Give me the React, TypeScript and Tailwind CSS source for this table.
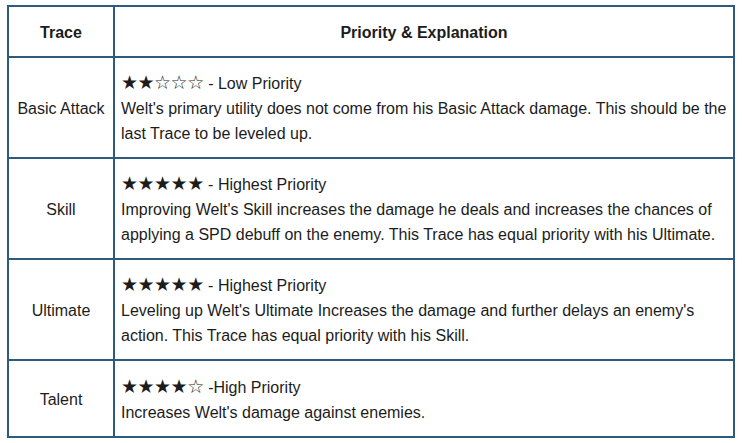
import React from "react";

interface TraceRow {
  name: string;
  stars: number;
  label: string;
  text: string;
}

const rows: TraceRow[] = [
  {
    name: "Basic Attack",
    stars: 2,
    label: " - Low Priority",
    text: "Welt's primary utility does not come from his Basic Attack damage. This should be the last Trace to be leveled up.",
  },
  {
    name: "Skill",
    stars: 5,
    label: " - Highest Priority",
    text: "Improving Welt's Skill increases the damage he deals and increases the chances of applying a SPD debuff on the enemy. This Trace has equal priority with his Ultimate.",
  },
  {
    name: "Ultimate",
    stars: 5,
    label: " - Highest Priority",
    text: "Leveling up Welt's Ultimate Increases the damage and further delays an enemy's action. This Trace has equal priority with his Skill.",
  },
  {
    name: "Talent",
    stars: 4,
    label: " -High Priority",
    text: "Increases Welt's damage against enemies.",
  },
];

const Stars = ({ count }: { count: number }) => (
  <span className="text-[19px] leading-none font-['DejaVu_Sans',sans-serif] tracking-[-0.5px]">
    {"★".repeat(count)}
    {"☆".repeat(5 - count)}
  </span>
);

const cell = "border-2 border-[#2c5b7d]";

export default function App() {
  return (
    <div className="pt-[5px] pl-[7px] bg-white min-h-screen font-['Liberation_Sans',Arial,sans-serif] text-[16px] text-[#1c1c1c]">
      <table className="border-collapse w-[728px]">
        <thead>
          <tr className="h-[51px]">
            <th className={`${cell} w-[106px] font-bold pt-[3px]`}>Trace</th>
            <th className={`${cell} font-bold pt-[3px]`}>Priority &amp; Explanation</th>
          </tr>
        </thead>
        <tbody>
          {rows.map((r, i) => (
            <tr key={r.name} className={i === 3 ? "h-[77px]" : "h-[101px]"}>
              <td className={`${cell} text-center pt-[2px]`}>{r.name}</td>
              <td className={`${cell} px-[6px] pt-[2px] leading-[25px]`}>
                <div>
                  <Stars count={r.stars} />
                  {r.label}
                </div>
                <div>{r.text}</div>
              </td>
            </tr>
          ))}
        </tbody>
      </table>
    </div>
  );
}
